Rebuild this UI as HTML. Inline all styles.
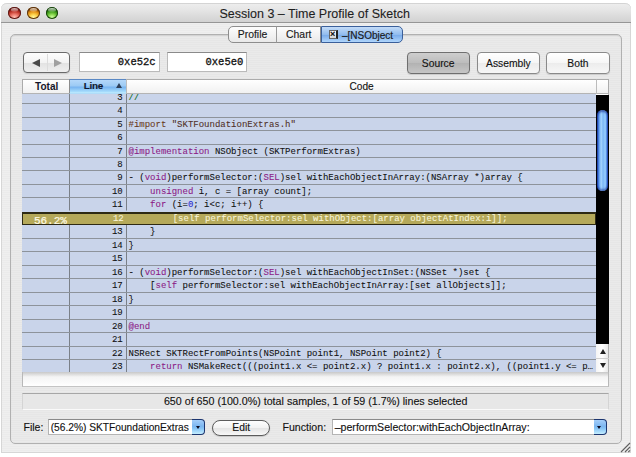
<!DOCTYPE html>
<html><head><meta charset="utf-8">
<style>
*{box-sizing:border-box;margin:0;padding:0}
html,body{width:636px;height:457px;overflow:hidden;background:#fff;font-family:"Liberation Sans",sans-serif;color:#111;position:relative}
.sans{-webkit-text-stroke:.12px currentColor}
.a{position:absolute}
#win{left:1px;top:3px;width:630px;height:449.5px;border-radius:6px 6px 0 0;
 background:repeating-linear-gradient(#efefef 0,#efefef 1px,#ebebeb 1px,#ebebeb 2px);border:1px solid #d6d6d6;border-top:none}
#title{left:1px;top:3px;width:630px;height:20px;border-radius:6px 6px 0 0;background:linear-gradient(#ededed,#e6e6e6 30%,#d2d2d2);border-bottom:1px solid #969696;border-top:1px solid #d4d4d4}
.light{width:12.6px;height:12.2px;border-radius:50%;top:6.5px;overflow:hidden}
.light::after{content:'';position:absolute;left:2.6px;top:1.2px;width:7.4px;height:4px;border-radius:50%;background:linear-gradient(rgba(255,255,255,.75),rgba(255,255,255,.1))}
#ttext{left:219.5px;top:6.7px;-webkit-text-stroke:.1px #1e1e1e;font-size:12.45px;font-size:12.5px;color:#1e1e1e;white-space:nowrap;line-height:15px}
#panel{left:10px;top:34px;width:611.5px;height:409.5px;border:1px solid #b0b0b0;border-radius:5px;
 background:repeating-linear-gradient(#eaeaea 0,#eaeaea 1px,#e6e6e6 1px,#e6e6e6 2px);box-shadow:inset 0 1px 1px rgba(0,0,0,.10)}
.seg{top:26.3px;height:16.5px;border:1px solid #8d8d8d;-webkit-text-stroke:.15px currentColor;background:linear-gradient(#fdfdfd,#e9e9e9);font-size:10.4px;line-height:16px;text-align:center;color:#1a1a1a}
.btn{top:52.3px;height:21.6px;border:1px solid #8a8a8a;border-radius:4px;background:linear-gradient(#ffffff,#f6f6f6 50%,#ececec 51%,#f7f7f7);font-size:10.3px;line-height:21px;text-align:center;color:#111;box-shadow:0 1px 1px rgba(0,0,0,.12)}
.fld{top:52.1px;height:19.5px;border:1px solid #bababa;border-top:1.5px solid #8a8a8a;background:#fff;font-family:"Liberation Mono",monospace;font-size:10.5px;line-height:18px;text-align:right;padding-right:3px;color:#111;-webkit-text-stroke:.3px #111}
.hd{top:79.2px;height:14.8px;border-top:1px solid #ababab;border-bottom:1px solid #b4b4b4;background:linear-gradient(#ffffff,#f1f1f1);font-size:10.1px;line-height:14.2px;text-align:center;color:#111}
.row{left:22.2px;width:573.8px;background:#c9d4ea;border-top:1px solid #8d939b;overflow:hidden}
.row::before{content:"";position:absolute;left:47px;top:0;bottom:0;border-left:1px solid #7a8088}
.row::after{content:"";position:absolute;left:103.7px;top:0;bottom:0;border-left:1px solid #7a8088}
.tot{position:absolute;left:0;width:43.6px;text-align:right;font-family:"Liberation Mono",monospace;font-size:11px;letter-spacing:-.05px;line-height:12px;top:2.4px;-webkit-text-stroke:.2px #fffbe6;white-space:nowrap}
.ln{-webkit-text-stroke:.08px currentColor;position:absolute;left:48px;width:52.5px;text-align:right;font-family:"Liberation Mono",monospace;font-size:9px;line-height:12px;top:1px;color:#111}
.cd{-webkit-text-stroke:.08px currentColor;position:absolute;left:106.3px;font-family:"Liberation Mono",monospace;font-size:9px;line-height:12px;top:1px;white-space:pre;color:#111}
.k{color:#8c1a86}.p{color:#6a3a1c}.s{color:#503028}.g{color:#0f6a14}.n{color:#2a28d0}
.sel{background:#b5a95a;border:1px solid #2e2a14;border-top-width:2px;margin-top:1px;z-index:2;height:13px!important;overflow:visible;box-shadow:0 -1.5px 0 #c9d4ea}
.sel .ln,.sel .cd{top:-1px}.sel .tot{top:1.4px}
.sel .ln,.sel .cd{color:#f8f4d8}.sel .tot{color:#fffbe6}.sel::before,.sel::after{display:none}
.r3{border-top:none}.r3 .ln,.r3 .cd{top:-2.3px}
.pop{top:419px;height:16.3px;border:1px solid #b4b4b4;border-top-color:#8a8a8a;border-right:none;background:#fff;font-size:10.2px;line-height:15.5px;color:#111;white-space:nowrap;padding-left:2px}
.pb{top:419px;width:13.2px;height:15.7px;border:1.2px solid #1c3670;border-left:none;border-radius:0 4px 4px 0;background:linear-gradient(#a4cefa,#7cb6f0 45%,#86c4f6 60%,#c4eeff)}
.pb::after{content:"";position:absolute;left:3.3px;top:6px;border-left:2.4px solid transparent;border-right:2.4px solid transparent;border-top:3.3px solid #0a0a20}
</style></head><body>
<div id="win" class="a"></div>
<div id="title" class="a"></div>
<div class="a light" style="left:8.2px;background:radial-gradient(ellipse 80% 70% at 50% 85%,#ffc0b4 0,#ec7a6c 35%,#c03428 70%,#7a1a14 95%);box-shadow:inset 0 0 0 1px #5c1c18"></div>
<div class="a light" style="left:27.1px;background:radial-gradient(ellipse 80% 70% at 50% 85%,#fff8a0 0,#fcd048 35%,#e08a10 70%,#8a4a08 95%);box-shadow:inset 0 0 0 1px #5a3410"></div>
<div class="a light" style="left:45.7px;background:radial-gradient(ellipse 80% 70% at 50% 85%,#d0ffa0 0,#8ad850 35%,#3c9a18 70%,#1a5a0c 95%);box-shadow:inset 0 0 0 1px #1c4410"></div>
<div id="ttext" class="a">Session 3 – Time Profile of Sketch</div>

<div id="panel" class="a"></div>
<div class="a seg sans" style="left:228px;width:49px;border-radius:5px 0 0 5px">Profile</div>
<div class="a seg sans" style="left:276.3px;width:45px;border-left:1px solid #9a9a9a">Chart</div>
<div class="a seg sans" style="left:321px;width:82.3px;border-radius:0 5px 5px 0;border-color:#3a5f9a;background:linear-gradient(#c4dcf8,#92bcee 50%,#76a8e8 51%,#b0d6fc)">
  <span style="position:absolute;left:6.5px;top:3px;width:9.5px;height:9px;background:linear-gradient(#fafafa,#d8d8d8);border:1px solid #666;border-right-width:2px;border-right-color:#222"><span style="position:absolute;left:0.5px;top:-2px;font-size:9px;line-height:10px;font-weight:bold;color:#111">×</span></span>
  <span style="position:absolute;left:20px;top:.8px;font-size:10px">–[NSObject</span>
</div>

<div class="a btn sans" style="left:23px;width:47px;height:20.8px;border-color:#6a6a6a;border-radius:4px;background:linear-gradient(#fdfdfd,#f3f3f3 50%,#e2e2e2 51%,#efefef)">
 <div class="a" style="left:22.5px;top:1px;height:17px;border-left:1px solid #dcdcdc"></div>
 <div class="a" style="left:8px;top:5.6px;width:0;height:0;border-top:4.4px solid transparent;border-bottom:4.4px solid transparent;border-right:8.4px solid #4a4a4a"></div>
 <div class="a" style="left:30px;top:5.6px;width:0;height:0;border-top:4.4px solid transparent;border-bottom:4.4px solid transparent;border-left:8px solid #a0a0a0"></div>
</div>
<div class="a fld" style="left:79px;width:80.6px">0xe52c</div>
<div class="a fld" style="left:167px;width:80.3px">0xe5e0</div>
<div class="a btn sans" style="left:406.6px;width:63.2px;border-color:#6f6f6f;background:linear-gradient(#cecece,#bcbcbc 50%,#b2b2b2 51%,#c6c6c6)">Source</div>
<div class="a btn sans" style="left:476.5px;width:63.8px">Assembly</div>
<div class="a btn sans" style="left:546.2px;width:63.4px">Both</div>

<div class="a hd" style="left:22.2px;width:48px;border-left:1px solid #ababab;font-weight:bold;font-size:10px;line-height:14px;color:#16162a">Total</div>
<div class="a hd sans" style="left:69.2px;width:57.7px;border-left:1px solid #8c8c8c;border-top-color:#5a88c4;border-bottom-color:#b0dcf8;background:linear-gradient(#b4d8fa,#9ccaf4 45%,#78b4f0 55%,#a6dcfc 90%,#c0ecfe);text-align:left;padding-left:13.5px;font-weight:bold;font-size:9.9px;letter-spacing:-.25px;line-height:12.8px;color:#101830">Line<span style="position:absolute;left:45.5px;top:3.3px;width:0;height:0;border-left:3.3px solid transparent;border-right:3.3px solid transparent;border-bottom:5.2px solid #2e3e56"></span></div>
<div class="a hd sans" style="left:125.9px;width:470.5px;border-left:1px solid #bcbcbc">Code</div>
<div class="a hd sans" style="left:595.9px;width:13.5px;border-left:1px solid #bcbcbc;border-right:1px solid #ababab"></div>

<div class="a row r3" style="top:94.00px;height:9.10px"><div class="tot"></div><div class="ln">3</div><div class="cd"><span class="g">//</span></div></div>
<div class="a row" style="top:103.10px;height:13.47px"><div class="tot"></div><div class="ln">4</div><div class="cd"></div></div>
<div class="a row" style="top:116.57px;height:13.47px"><div class="tot"></div><div class="ln">5</div><div class="cd"><span class="p">#import</span> <span class="s">&quot;SKTFoundationExtras.h&quot;</span></div></div>
<div class="a row" style="top:130.04px;height:13.47px"><div class="tot"></div><div class="ln">6</div><div class="cd"></div></div>
<div class="a row" style="top:143.50px;height:13.47px"><div class="tot"></div><div class="ln">7</div><div class="cd"><span class="k">@implementation</span> NSObject (SKTPerformExtras)</div></div>
<div class="a row" style="top:156.97px;height:13.47px"><div class="tot"></div><div class="ln">8</div><div class="cd"></div></div>
<div class="a row" style="top:170.44px;height:13.47px"><div class="tot"></div><div class="ln">9</div><div class="cd">- (<span class="k">void</span>)performSelector:(<span class="k">SEL</span>)sel withEachObjectInArray:(NSArray *)array {</div></div>
<div class="a row" style="top:183.91px;height:13.47px"><div class="tot"></div><div class="ln">10</div><div class="cd">    <span class="k">unsigned</span> i, c = [array count];</div></div>
<div class="a row" style="top:197.38px;height:13.47px"><div class="tot"></div><div class="ln">11</div><div class="cd">    <span class="k">for</span> (i=<span class="n">0</span>; i&lt;c; i++) {</div></div>
<div class="a row sel" style="top:210.84px;height:13.47px"><div class="tot">56.2%</div><div class="ln">12</div><div class="cd">        [self performSelector:sel withObject:[array objectAtIndex:i]];</div></div>
<div class="a row" style="top:224.31px;height:13.47px"><div class="tot"></div><div class="ln">13</div><div class="cd">    }</div></div>
<div class="a row" style="top:237.78px;height:13.47px"><div class="tot"></div><div class="ln">14</div><div class="cd">}</div></div>
<div class="a row" style="top:251.25px;height:13.47px"><div class="tot"></div><div class="ln">15</div><div class="cd"></div></div>
<div class="a row" style="top:264.72px;height:13.47px"><div class="tot"></div><div class="ln">16</div><div class="cd">- (<span class="k">void</span>)performSelector:(<span class="k">SEL</span>)sel withEachObjectInSet:(NSSet *)set {</div></div>
<div class="a row" style="top:278.18px;height:13.47px"><div class="tot"></div><div class="ln">17</div><div class="cd">    [<span class="k">self</span> performSelector:sel withEachObjectInArray:[set allObjects]];</div></div>
<div class="a row" style="top:291.65px;height:13.47px"><div class="tot"></div><div class="ln">18</div><div class="cd">}</div></div>
<div class="a row" style="top:305.12px;height:13.47px"><div class="tot"></div><div class="ln">19</div><div class="cd"></div></div>
<div class="a row" style="top:318.59px;height:13.47px"><div class="tot"></div><div class="ln">20</div><div class="cd"><span class="k">@end</span></div></div>
<div class="a row" style="top:332.06px;height:13.47px"><div class="tot"></div><div class="ln">21</div><div class="cd"></div></div>
<div class="a row" style="top:345.52px;height:13.47px"><div class="tot"></div><div class="ln">22</div><div class="cd">NSRect SKTRectFromPoints(NSPoint point1, NSPoint point2) {</div></div>
<div class="a row" style="top:358.99px;height:13.47px"><div class="tot"></div><div class="ln">23</div><div class="cd">    <span class="k">return</span> NSMakeRect(((point1.x &lt;= point2.x) ? point1.x : point2.x), ((point1.y &lt;= p…</div></div>

<!-- scrollbar -->
<div class="a" style="left:596px;top:93.5px;width:13.4px;height:279px;background:#fff;border-right:1px solid #b0b0b0"></div>
<div class="a" style="left:596px;top:95px;width:13.3px;height:248.6px;background:#000"></div>
<div class="a" style="left:597.3px;top:109.6px;width:10.6px;height:81.6px;border-radius:5.3px;background:linear-gradient(90deg,#1c3ca8 0,#5a9af0 18%,#a6d6ff 38%,#7ab6f6 55%,#9ad0ff 75%,#4a86e6 90%,#1c3ca8 100%);box-shadow:inset 0 2px 2px rgba(20,40,140,.6),inset 0 -2px 2px rgba(20,40,140,.5)"></div>
<div class="a" style="left:596px;top:343.6px;width:13.4px;height:28.6px;background:linear-gradient(90deg,#f4f4f4,#ffffff 50%,#e8e8e8);border-right:1px solid #b0b0b0"></div>
<div class="a" style="left:596px;top:358.2px;width:13.4px;border-top:1px solid #cfcfcf"></div>
<div class="a" style="left:599.8px;top:348.5px;border-left:3px solid transparent;border-right:3px solid transparent;border-bottom:5px solid #222"></div>
<div class="a" style="left:599.8px;top:362.6px;border-left:3px solid transparent;border-right:3px solid transparent;border-top:5px solid #222"></div>

<!-- below table -->
<div class="a" style="left:22.2px;top:372.2px;width:587.2px;height:15px;background:linear-gradient(#c8c8c8,#f4f4f4 35%,#ffffff);border-left:1px solid #b8b8b8;border-right:1px solid #b8b8b8;border-bottom:1px solid #c4c4c4"></div>

<!-- status -->
<div class="a sans" style="left:22.3px;top:392.8px;width:586.8px;height:17.4px;border:1px solid #d4d4d4;border-top-color:#a6a6a6;border-bottom-color:#fafafa;background:#e7e7e7;font-size:10.7px;line-height:15.2px;text-align:center;color:#111">650 of 650 (100.0%) total samples, 1 of 59 (1.7%) lines selected</div>

<!-- bottom controls -->
<div class="a sans" style="left:23.5px;top:419.5px;font-size:10.5px;line-height:14px;color:#111">File:</div>
<div class="a pop sans" style="left:47.7px;width:145px">(56.2%) SKTFoundationExtras</div>
<div class="a pb" style="left:192.3px"></div>
<div class="a btn sans" style="left:212.4px;width:57.6px;top:420px;height:15.6px;border-radius:8px;line-height:14.2px;font-size:10.3px;border-color:#5c5c5c;background:linear-gradient(#fefefe,#f2f2f2 50%,#e4e4e4 51%,#f8f8f8);box-shadow:0 .5px 1px rgba(0,0,0,.25)">Edit</div>
<div class="a sans" style="left:282.5px;top:419.5px;font-size:10.6px;line-height:14px;color:#111">Function:</div>
<div class="a pop sans" style="left:331.7px;width:262.5px;font-size:10.6px">–performSelector:withEachObjectInArray:</div>
<div class="a pb" style="left:594px"></div>

<!-- resize grip -->
<svg class="a" style="left:619px;top:441px" width="12" height="12" viewBox="0 0 12 12"><path d="M2 11 L11 2 M6 11 L11 6 M9.3 11 L11 9.3" stroke="#606060" stroke-width="1.1" fill="none"/></svg>
</body></html>
